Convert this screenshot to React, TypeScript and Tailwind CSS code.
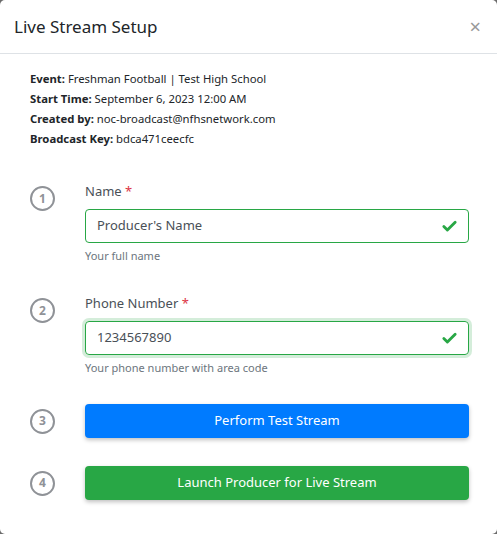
import { Check } from "lucide-react";

const INFO = [
  { label: "Event:", value: "Freshman Football | Test High School" },
  { label: "Start Time:", value: "September 6, 2023 12:00 AM" },
  { label: "Created by:", value: "noc-broadcast@nfhsnetwork.com" },
  { label: "Broadcast Key:", value: "bdca471ceecfc" },
];

function Step({ n }: { n: number }) {
  return (
    <div className="flex h-[25px] w-[25px] shrink-0 items-center justify-center rounded-full border-2 border-[#8f9297] text-[12px] font-bold text-[#8f9297]">
      {n}
    </div>
  );
}

function Field({
  n,
  label,
  value,
  help,
  focused,
}: {
  n: number;
  label: string;
  value: string;
  help: string;
  focused?: boolean;
}) {
  return (
    <div className="flex">
      <div className="w-[55px] pt-[5px]">
        <Step n={n} />
      </div>
      <div className="flex-1">
        <p className="text-[13px] leading-[20px] text-[#495057]">
          {label} <span className="text-[#dc3545]">*</span>
        </p>
        <div
          className={
            focused
              ? "mt-[8px] flex h-[34px] items-center rounded-[4px] border border-[#28a745] pl-[11px] pr-[10px] shadow-[0_0_0_3px_rgba(40,167,69,0.2)]"
              : "mt-[8px] flex h-[34px] items-center rounded-[4px] border border-[#28a745] pl-[11px] pr-[10px]"
          }
        >
          <span className="flex-1 text-[13px] text-[#495057]">{value}</span>
          <Check className="h-[17px] w-[17px] text-[#28a745]" strokeWidth={4} />
        </div>
        <p className="mt-[5px] text-[11px] leading-[16px] text-[#6c757d]">{help}</p>
      </div>
    </div>
  );
}

export default function App() {
  return (
    <div
      className="h-[534px] w-[497px] bg-[#6b6b6b]"
      style={{ fontFamily: '"Noto Sans", "Open Sans", sans-serif' }}
    >
      <div className="flex h-full flex-col rounded-[5px] bg-white">
        {/* Header */}
        <div className="flex h-[54px] items-center justify-between border-b border-[#dee2e6] pl-[14px] pr-[16px]">
          <h5 className="text-[17px] text-[#212529]">Live Stream Setup</h5>
          <span className="text-[20px] leading-none text-[#999]">×</span>
        </div>

        {/* Body */}
        <div className="pl-[30px] pr-[28px] pt-[15px]">
          <div className="text-[11.3px] leading-[20px] text-[#212529]">
            {INFO.map((r) => (
              <p key={r.label}>
                <span className="font-bold">{r.label}</span> {r.value}
              </p>
            ))}
          </div>

          <div className="mt-[32px]">
            <Field n={1} label="Name" value="Producer's Name" help="Your full name" />
            <div className="h-[29px]" />
            <Field
              n={2}
              label="Phone Number"
              value="1234567890"
              help="Your phone number with area code"
              focused
            />
          </div>

          <div className="mt-[28px] flex items-center">
            <div className="w-[55px]">
              <Step n={3} />
            </div>
            <button className="h-[34px] flex-1 rounded-[4px] bg-[#007bff] text-[13px] text-white shadow-[0_2px_4px_rgba(0,0,0,0.25)]">
              Perform Test Stream
            </button>
          </div>

          <div className="mt-[28px] flex items-center">
            <div className="w-[55px]">
              <Step n={4} />
            </div>
            <button className="h-[34px] flex-1 rounded-[4px] bg-[#28a745] text-[13px] text-white shadow-[0_2px_4px_rgba(0,0,0,0.25)]">
              Launch Producer for Live Stream
            </button>
          </div>
        </div>
      </div>
    </div>
  );
}
